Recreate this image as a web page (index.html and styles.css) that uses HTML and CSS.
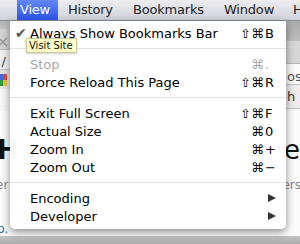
FILE: index.html
```html
<!DOCTYPE html>
<html>
<head>
<meta charset="utf-8">
<link rel="stylesheet" href="styles.css">
</head>
<body>
<div class="menubar">
  <span class="mb-item active">View</span>
  <span class="mb-item">History</span>
  <span class="mb-item">Bookmarks</span>
  <span class="mb-item">Window</span>
  <span class="mb-item">Help</span>
</div>
<div class="page">
  <div class="top">
    <div class="col left">
      <div class="b lt1"></div>
      <div class="b lt2"><span class="close">×</span></div>
      <div class="b lt3">:/</div>
      <div class="b lt4"><span class="g1"></span><span class="g2"></span></div>
    </div>
    <div class="col right">
      <div class="b rt1"></div>
      <div class="b rt2"></div>
      <div class="b rt3">os</div>
      <div class="b rt4">h</div>
    </div>
  </div>
  <div class="content">
    <div class="row big"><span class="hl">H</span><span class="hr">e</span></div>
    <div class="row small"><span class="sl">er</span><span class="sr">ers</span></div>
    <div class="row small2"><span class="pl">p.</span></div>
  </div>
  <div class="bottom"></div>
</div>

<div class="menu">
  <div class="item"><span class="check">✔</span><span class="label">Always Show Bookmarks Bar</span><span class="mods">⇧⌘</span><span class="key">B</span></div>
  <div class="sep"></div>
  <div class="item disabled"><span class="label">Stop</span><span class="mods">⌘</span><span class="key">.</span></div>
  <div class="item"><span class="label">Force Reload This Page</span><span class="mods">⇧⌘</span><span class="key">R</span></div>
  <div class="sep"></div>
  <div class="item"><span class="label">Exit Full Screen</span><span class="mods">⇧⌘</span><span class="key">F</span></div>
  <div class="item"><span class="label">Actual Size</span><span class="mods">⌘</span><span class="key">0</span></div>
  <div class="item"><span class="label">Zoom In</span><span class="mods">⌘</span><span class="key">+</span></div>
  <div class="item"><span class="label">Zoom Out</span><span class="mods">⌘</span><span class="key">−</span></div>
  <div class="sep"></div>
  <div class="item"><span class="label">Encoding</span><span class="arrow"></span></div>
  <div class="item"><span class="label">Developer</span><span class="arrow"></span></div>
</div>

<div class="tooltip">Visit Site</div>
</body>
</html>
```

FILE: styles.css
```css
* { box-sizing: border-box; }
html, body { margin: 0; padding: 0; }
body {
  width: 300px;
  height: 244px;
  overflow: hidden;
  position: relative;
  font-family: "DejaVu Sans", "Liberation Sans", sans-serif;
  background: #f6f6f6;
}
.menubar {
  height: 21px;
  display: grid;
  grid-template-columns: 41px 65px 91px 69px 40px;
  padding-left: 17px;
  background: linear-gradient(#ededf0, #d0d2db);
  border-bottom: 1px solid #8a8c96;
  font-size: 13px;
  letter-spacing: -0.2px;
  color: #222;
  white-space: nowrap;
}
.mb-item {
  padding-left: 10px;
  line-height: 20px;
}
.mb-item.active {
  background: linear-gradient(#6486f7, #2a55ea);
  color: #fff;
  padding-left: 3px;
}
.page { display: flex; flex-direction: column; height: 223px; }
.top { display: flex; justify-content: space-between; height: 90px; }
.col { display: flex; flex-direction: column; font-size: 13px; }
.left { width: 10px; }
.right { width: 14px; }
.b { display: flex; align-items: center; overflow: hidden; white-space: nowrap; }
.lt1 { height: 8px; background: linear-gradient(#b2b2b2, #c4c4c4); }
.lt2 { height: 20px; background: #d3d3d3; color: #999; font-size: 16px; align-items: flex-end; }
.close { margin-left: -4px; line-height: 14px; }
.lt3 { height: 20px; background: #f0f0f0; color: #444; border-top: 1px solid #b8b8b8; margin-left: -3px; padding-top: 4px; }
.lt4 { height: 20px; background: #e4e4e4; flex-direction: column; align-items: flex-start; justify-content: center; border-top: 1px solid #c4c4c4; }
.g1 { width: 7px; height: 6px; background: linear-gradient(90deg, #3b6ce0 50%, #e04a3a 50%); }
.g2 { width: 7px; height: 6px; background: linear-gradient(90deg, #2d9a4a 50%, #f1c230 50%); }
.rt1 { height: 20px; background: linear-gradient(#a9a9a9, #bdbdbd); }
.rt2 { height: 22px; background: #d6d6d6; }
.rt3 { height: 22px; background: #fafafa; color: #555; border-top: 1px solid #b4b4b4; border-bottom: 1px solid #c0c0c0; padding-left: 1px; padding-top: 4px; }
.rt4 { height: 24px; background: #ececec; color: #333; border-bottom: 1px solid #c0c0c0; padding-left: 1px; }
.content { flex: 1; display: flex; flex-direction: column; background: #fbfbfb; }
.row { display: flex; justify-content: space-between; }
.big { font-size: 26px; font-weight: bold; color: #111; margin-top: 24px; line-height: 30px; }
.hl { margin-left: -3px; }
.hr { font-weight: normal; }
.small { font-size: 12px; line-height: 16px; color: #888; margin-top: 12px; }
.sl { margin-left: -4px; }
.sr { margin-right: -1px; }
.small2 { font-size: 12px; line-height: 14px; color: #2a66c0; margin-top: 29px; }
.pl { margin-left: -3px; }
.bottom { height: 8px; background: linear-gradient(#c4c4c4, #aaaaaa); }

.menu {
  position: absolute;
  left: 10px;
  top: 21px;
  width: 276px;
  height: 208px;
  padding-top: 3px;
  background: rgba(255, 255, 255, 0.97);
  border-radius: 0 0 5px 5px;
  box-shadow: 0 3px 8px rgba(0, 0, 0, 0.45);
  font-size: 13px;
  color: #000;
}
.item {
  height: 18px;
  display: flex;
  align-items: center;
  position: relative;
}
.label { margin-left: 20px; flex: 1; white-space: nowrap; }
.check { position: absolute; left: 5px; top: 2px; font-size: 14px; line-height: 14px; color: #555; }
.mods { width: 33px; text-align: right; }
.key { width: 21px; margin-left: 1px; }
.disabled { color: #a8a8a8; }
.sep { height: 13px; display: flex; align-items: center; }
.sep::before { content: ""; flex: 1; height: 1px; background: #e2e2e2; }
.arrow {
  width: 0; height: 0;
  border-left: 8px solid #333;
  border-top: 4.5px solid transparent;
  border-bottom: 4.5px solid transparent;
  margin-right: 10px;
}
.tooltip {
  position: absolute;
  left: 26px;
  top: 38px;
  width: 51px;
  height: 15px;
  background: #ffffc7;
  border: 1px solid #c8c8a0;
  font-size: 10px;
  line-height: 13px;
  padding-left: 2px;
  color: #111;
  box-shadow: 0 1px 2px rgba(0,0,0,0.2);
}
```
